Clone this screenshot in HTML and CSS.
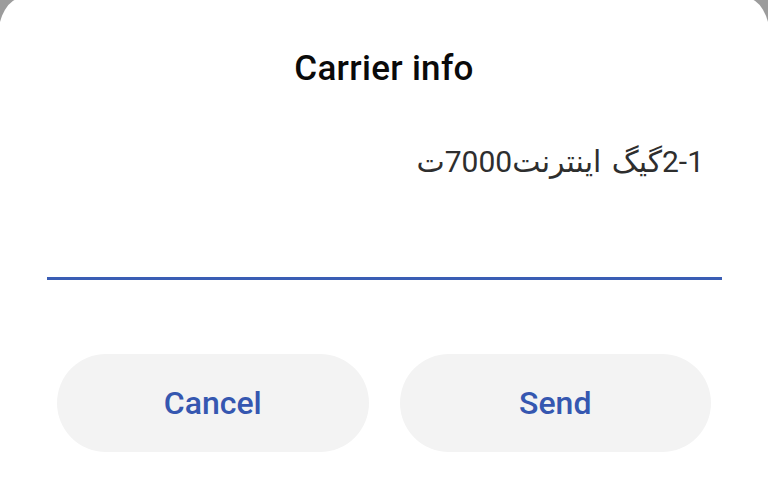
FILE: index.html
```html
<!DOCTYPE html>
<html lang="en">
<head>
<meta charset="utf-8">
<link rel="stylesheet" href="styles.css">
</head>
<body>
<div class="sheet">
  <h1 class="title">Carrier info</h1>
  <div class="field">
    <div class="field-text" dir="rtl">2-1گیگ اینترنت7000ت</div>
    <div class="field-line"></div>
  </div>
  <div class="actions">
    <button class="btn">Cancel</button>
    <button class="btn">Send</button>
  </div>
</div>
</body>
</html>
```

FILE: styles.css
```css
html, body {
  margin: 0;
  padding: 0;
  background: #9c9c9c;
  height: 100%;
  overflow: hidden;
}
.sheet {
  margin: -2px -2px 0 -2px;
  min-height: calc(100vh + 2px);
  background: #ffffff;
  border-radius: 24px 24px 0 0 / 40px 40px 0 0;
  font-family: Roboto, "DejaVu Sans", sans-serif;
  box-sizing: border-box;
  padding-top: 49px;
}
.title {
  margin: 0;
  text-align: center;
  font-size: 35px;
  font-weight: 500;
  line-height: 44px;
  color: #0a0a0a;
  letter-spacing: 0.3px;
}
.field {
  margin: 51px 48px 0 49px;
}
.field-text {
  box-sizing: border-box;
  height: 135px;
  padding: 0 18px 0 0;
  font-size: 30px;
  line-height: 40px;
  color: #2e2e2e;
  text-align: right;
  direction: rtl;
  word-spacing: 3px;
}
.field-line {
  height: 3px;
  background: #3a5db4;
}
.actions {
  display: flex;
  gap: 31px;
  margin: 74px 59px 0 59px;
}
.btn {
  flex: 1;
  height: 98px;
  border: none;
  border-radius: 49px;
  background: #f3f3f3;
  color: #3557b0;
  font-family: Roboto, sans-serif;
  font-size: 32px;
  font-weight: 500;
  padding: 0;
}
```
